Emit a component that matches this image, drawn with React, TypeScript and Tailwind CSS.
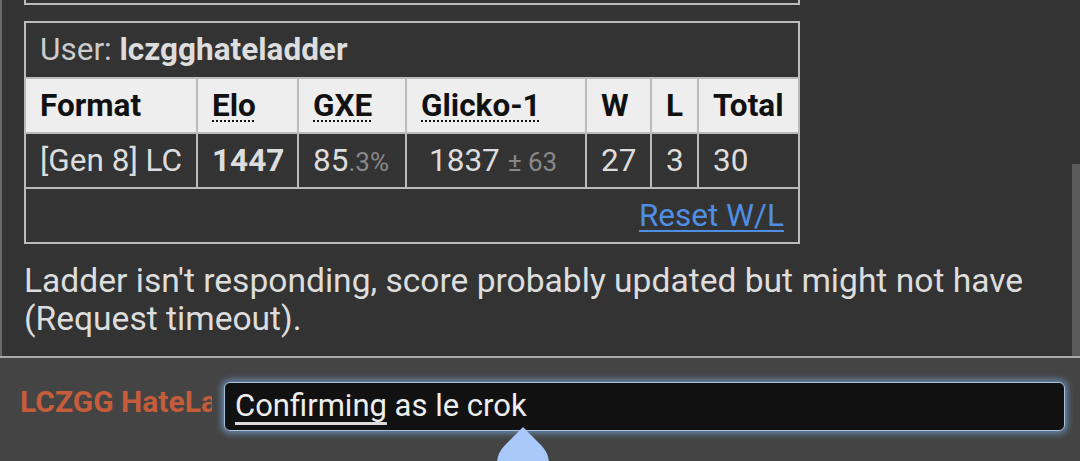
import React from 'react';

const cell = 'border-2 border-[#bbbbbb] px-[14px] text-left align-middle whitespace-nowrap';

export default function App() {
    return (
        <div className="relative w-[1080px] h-[461px] overflow-hidden bg-[#333333] text-[#dddddd] font-['Roboto',sans-serif]">
            {/* log panel */}
            <div className="relative h-[356px] border-l-2 border-[#6a6a6a] pl-[22px]">
                <div className="w-[776px] h-[5px] border-x-2 border-b-2 border-[#bbbbbb]" />

                <table className="mt-[16px] w-[776px] table-fixed border-collapse border-2 border-[#bbbbbb] text-[31.5px]">
                    <colgroup>
                        <col className="w-[172px]" />
                        <col className="w-[101px]" />
                        <col className="w-[108px]" />
                        <col className="w-[180px]" />
                        <col className="w-[65px]" />
                        <col className="w-[47px]" />
                        <col className="w-[101px]" />
                    </colgroup>
                    <tbody>
                        <tr className="h-[56px]">
                            <th colSpan={7} className={`${cell} font-normal text-[#cccccc]`}>
                                User: <strong className="font-bold text-[#dddddd]">lczgghateladder</strong>
                            </th>
                        </tr>
                        <tr className="h-[55px] bg-[#eeeeee] text-[#111111] font-bold">
                            <th className={cell}>Format</th>
                            <th className={cell}><abbr className="underline decoration-dotted decoration-2 underline-offset-[5px]">Elo</abbr></th>
                            <th className={cell}><abbr className="underline decoration-dotted decoration-2 underline-offset-[5px]">GXE</abbr></th>
                            <th className={cell}><abbr className="underline decoration-dotted decoration-2 underline-offset-[5px]">Glicko-1</abbr></th>
                            <th className={cell}>W</th>
                            <th className={cell}>L</th>
                            <th className={cell}>Total</th>
                        </tr>
                        <tr className="h-[55px]">
                            <td className={cell}>[Gen 8] LC</td>
                            <td className={`${cell} font-bold`}>1447</td>
                            <td className={cell}>85<small className="text-[26px] text-[#888888]">.3%</small></td>
                            <td className={`${cell} pl-[22px]`}>1837 <small className="text-[26px] text-[#888888]">± 63</small></td>
                            <td className={cell}>27</td>
                            <td className={cell}>3</td>
                            <td className={cell}>30</td>
                        </tr>
                        <tr className="h-[55px]">
                            <td colSpan={7} className={`${cell} text-right`}>
                                <a className="text-[#4f8fe3] underline decoration-2 underline-offset-[4px]">Reset W/L</a>
                            </td>
                        </tr>
                    </tbody>
                </table>

                <p className="mt-[18px] w-[1030px] text-[33.6px] leading-[38px] text-[#dddddd]">
                    Ladder isn't responding, score probably updated but might not have (Request timeout).
                </p>

                {/* scrollbar thumb */}
                <div className="absolute right-0 top-[164px] w-[8px] h-[192px] bg-[#5a5a5a]" />
            </div>

            {/* chat input bar */}
            <div className="h-[105px] border-t-2 border-[#aaaaaa] bg-[#444444] flex items-start pt-[24px] pl-[20px]">
                <div className="w-[192px] overflow-hidden whitespace-nowrap text-[30px] leading-[40px] font-bold text-[#c55c3a]">
                    LCZGG HateLadder
                </div>
                <div className="ml-[12px] w-[841px] h-[49px] rounded-[6px] border border-[#a9c1da] bg-[#111111] shadow-[0_0_7px_2px_rgba(120,170,225,0.75)] pl-[10px] flex items-center text-[31px] text-[#eeeeee] whitespace-nowrap">
                    <span className="underline decoration-[3px] underline-offset-[6px] decoration-[#dddddd]">Confirming</span>
                    <span>&nbsp;as le crok</span>
                </div>
            </div>

            {/* text cursor handle */}
            <svg className="absolute left-[497px] top-[427px]" width="52" height="40" viewBox="0 0 52 40">
                <path d="M26 0 L7.6 18.4 A26 26 0 1 0 44.4 18.4 Z" fill="#a9c9fa" />
            </svg>
        </div>
    );
}
